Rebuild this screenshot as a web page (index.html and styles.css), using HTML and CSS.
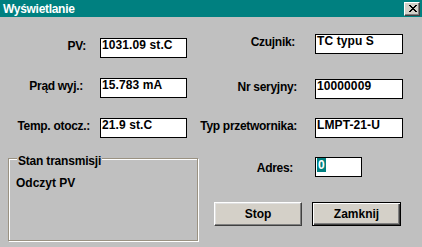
FILE: index.html
```html
<!DOCTYPE html>
<html lang="pl">
<head>
<meta charset="utf-8">
<title>Wyświetlanie</title>
<link rel="stylesheet" href="styles.css">
</head>
<body>
<div class="window">
  <div class="titlebar">
    <span class="title">Wyświetlanie</span>
    <span class="close-btn">
      <svg width="8" height="7" viewBox="0 0 8 7" shape-rendering="crispEdges"><path fill="#000" d="M0 0h2v1H0zM6 0h2v1H6zM1 1h2v1H1zM5 1h2v1H5zM2 2h4v1H2zM3 3h2v1H3zM2 4h4v1H2zM1 5h2v1H1zM5 5h2v1H5zM0 6h2v1H0zM6 6h2v1H6z"/></svg>
    </span>
  </div>
  <div class="main">
    <div class="col-left">
      <div class="fields-left">
        <span class="label label-pv">PV:</span><span class="box">1031.09 st.C</span>
        <span class="label label-prad">Prąd wyj.:</span><span class="box">15.783 mA</span>
        <span class="label">Temp. otocz.:</span><span class="box">21.9 st.C</span>
      </div>
      <div class="group">
        <span class="legend">Stan transmisji</span>
        <div class="group-text">Odczyt PV</div>
      </div>
    </div>
    <div class="col-right">
      <div class="fields-right">
        <span class="label label-czujnik">Czujnik:</span><span class="box box-first">TC typu S</span>
        <span class="label">Nr seryjny:</span><span class="box">10000009</span>
        <span class="label">Typ przetwornika:</span><span class="box">LMPT-21-U</span>
        <span class="label label-adres">Adres:</span><span class="box box-small"><span class="selection">0</span></span>
      </div>
      <div class="buttons">
        <button class="btn">Stop</button>
        <button class="btn btn-default">Zamknij</button>
      </div>
    </div>
  </div>
</div>
</body>
</html>
```
FILE: styles.css
```css
html, body {
  margin: 0;
  padding: 0;
}
body {
  background: #c0c0c0;
  font-family: "Liberation Sans", Arial, sans-serif;
  font-weight: bold;
  font-size: 12px;
  line-height: 14px;
  color: #000;
  overflow: hidden;
}
.window {
  width: 422px;
  height: 247px;
  background: #c0c0c0;
}
.titlebar {
  height: 17px;
  box-sizing: border-box;
  background: #008080;
  display: flex;
  align-items: flex-start;
  justify-content: space-between;
  padding: 0 2px 0 3px;
}
.title {
  color: #fff;
  margin-top: 2px;
  letter-spacing: -0.3px;
}
.close-btn {
  margin-top: 2px;
  width: 16px;
  height: 14px;
  box-sizing: border-box;
  background: #d4d0c8;
  border: 1px solid;
  border-color: #fff #404040 #404040 #fff;
  box-shadow: inset -1px -1px #808080;
  display: flex;
  align-items: flex-start;
  padding: 2px 0 0 4px;
}
.close-btn svg {
  display: block;
}
.main {
  display: grid;
  grid-template-columns: 190px 232px;
}
.label {
  justify-self: end;
  white-space: nowrap;
  letter-spacing: -0.3px;
  padding-top: 1px;
}
.box {
  height: 20px;
  box-sizing: border-box;
  border: 1px solid #000;
  background: #fff;
  padding: 0 2px 0 1px;
  line-height: 12px;
  white-space: nowrap;
  letter-spacing: 0.1px;
  overflow: hidden;
}
.fields-left {
  display: grid;
  grid-template-columns: 90px 87px;
  grid-auto-rows: 20px;
  column-gap: 10px;
  row-gap: 20px;
  margin-top: 21px;
}
.label-pv {
  margin-right: 4px;
}
.label-prad {
  margin-right: 7px;
}
.fields-right {
  display: grid;
  grid-template-columns: 107px 88px;
  grid-template-rows: 26px 20px 20px 20px;
  column-gap: 18px;
  row-gap: 19px;
  margin-top: 17px;
  align-items: start;
}
.label-czujnik {
  margin-right: 2px;
}
.label-adres {
  margin-right: 4px;
  padding-top: 4px;
}
.box-small {
  width: 47px;
}
.selection {
  display: inline-block;
  vertical-align: top;
  height: 14px;
  line-height: 14px;
  background: #008080;
  color: #fff;
  padding: 0 1px;
}
.group {
  position: relative;
  margin: 20px 0 0 8px;
  width: 190px;
  height: 83px;
  box-sizing: border-box;
  border: 1px solid #9a9282;
  box-shadow: inset 1px 1px #fff, 1px 1px #fff;
  padding: 17px 0 0 7px;
}
.legend {
  position: absolute;
  top: -5px;
  left: 8px;
  padding: 0 1px;
  background: #c0c0c0;
  white-space: nowrap;
  letter-spacing: -0.2px;
}
.group-text {
  white-space: nowrap;
}
.buttons {
  display: flex;
  gap: 10px;
  margin: 25px 0 0 24px;
}
.btn {
  width: 88px;
  height: 24px;
  box-sizing: border-box;
  background: #d4d0c8;
  border: 1px solid;
  border-color: #fff #404040 #404040 #fff;
  box-shadow: inset -1px -1px #808080, inset 1px 1px #dfdfdf;
  font-family: "Liberation Sans", Arial, sans-serif;
  font-weight: bold;
  font-size: 12px;
  color: #000;
  padding: 0;
  margin: 0;
}
.btn-default {
  width: 89px;
  border: 1px solid #000;
  box-shadow: inset 1px 1px #fff, inset -1px -1px #404040, inset -2px -2px #808080;
}
```
